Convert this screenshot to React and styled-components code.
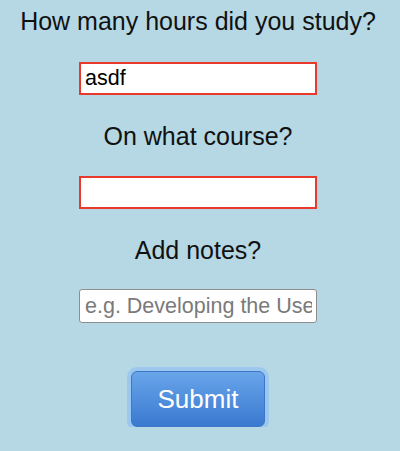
import React from "react";
import styled, { createGlobalStyle } from "styled-components";

const Global = createGlobalStyle`
  html, body { margin: 0; padding: 0; background: #b5d8e4; }
  body { font-family: "Liberation Sans", Arial, sans-serif; }
`;

const Form = styled.form`
  display: flex;
  flex-direction: column;
  align-items: center;
  padding-top: 9px;
  width: 396px;
`;

const Label = styled.label`
  display: block;
  margin: ${(p) => p.$top || 0}px 0 0;
  font-size: 25px;
  line-height: 25px;
  color: #111;
  text-align: center;
  white-space: nowrap;
`;

const Input = styled.input`
  box-sizing: border-box;
  width: 238px;
  height: ${(p) => (p.$invalid ? 33 : 34)}px;
  margin-top: ${(p) => p.$top}px;
  padding: 0 4px 0 ${(p) => (p.$invalid ? 4 : 5)}px;
  font-family: "Liberation Sans", Arial, sans-serif;
  font-size: 21.5px;
  color: #000;
  background: #fff;
  border: ${(p) => (p.$invalid ? "2px solid #e8392b" : "1px solid #8e8e8e")};
  border-radius: ${(p) => (p.$invalid ? 0 : 3)}px;
  outline: none;
  &::placeholder { color: #7a7a7a; }
`;

const Button = styled.button`
  box-sizing: border-box;
  width: 134px;
  height: 56px;
  margin-top: 48px;
  font-family: "Liberation Sans", Arial, sans-serif;
  font-size: 26px;
  color: #fff;
  background: linear-gradient(#69a5ea, #3a79d0);
  border: 1px solid #3d78c8;
  border-radius: 6px;
  box-shadow: 0 0 0 4px #9cc8ef;
  cursor: pointer;
`;

export default function App() {
  return (
    <>
      <Global />
      <Form onSubmit={(e) => e.preventDefault()}>
        <Label>How many hours did you study?</Label>
        <Input $invalid $top={28} defaultValue="asdf" />
        <Label $top={29}>On what course?</Label>
        <Input $invalid $top={27} />
        <Label $top={29}>Add notes?</Label>
        <Input $top={26} placeholder="e.g. Developing the User Interface" />
        <Button type="submit">Submit</Button>
      </Form>
    </>
  );
}
